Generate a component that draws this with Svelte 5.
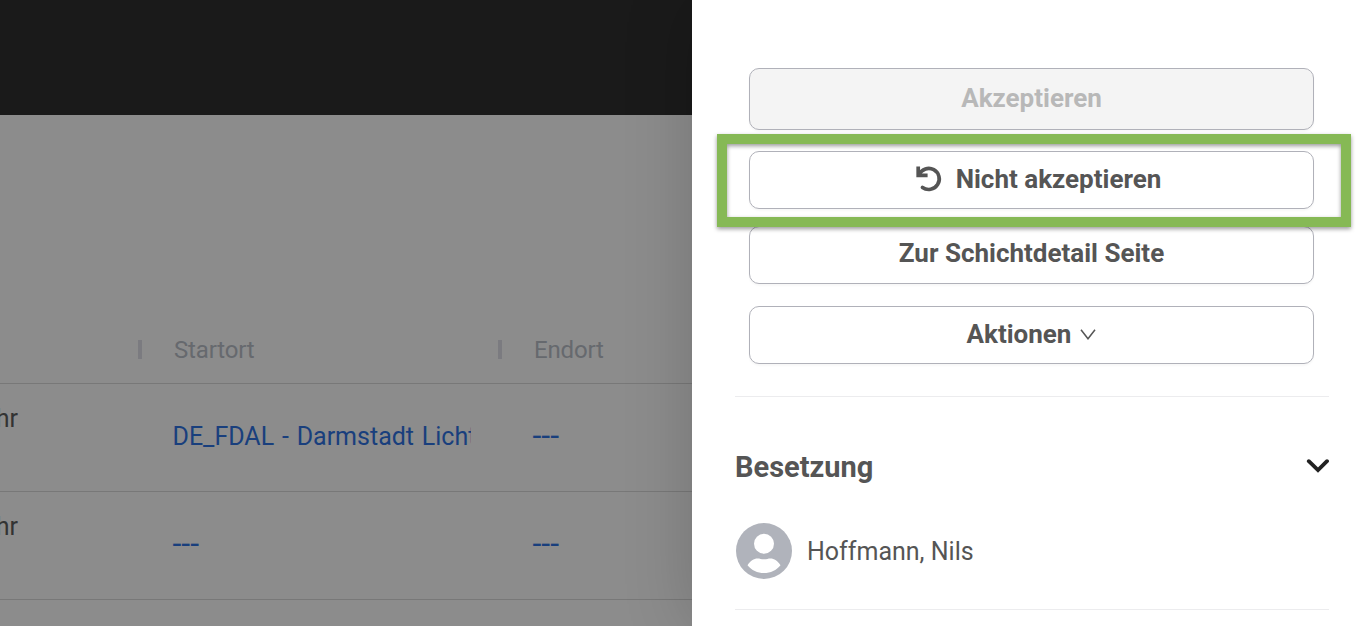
<script lang="ts">
  type Shift = {
    time: string;
    start: string;
    end: string;
  };

  const EMPTY = "---";

  const shifts: Shift[] = [
    { time: "Uhr", start: "DE_FDAL - Darmstadt Lichtwiese", end: EMPTY },
    { time: "Uhr", start: EMPTY, end: EMPTY },
  ];

  const crew: string[] = ["Hoffmann, Nils"];

  let crewOpen = $state(true);
</script>

<div class="page">
  <main class="backdrop">
    <header class="topbar"></header>
    <div class="row head">
      <span class="cell time"></span>
      <span class="cell">Startort</span>
      <span class="cell">Endort</span>
    </div>
    {#each shifts as shift}
      <div class="row shift">
        <span class="cell time">{shift.time}</span>
        {#each [shift.start, shift.end] as place}
          <span class="cell link">
            <span class="clip" class:empty={place === EMPTY}>{place}</span>
          </span>
        {/each}
      </div>
    {/each}
  </main>

  <aside class="drawer">
    <div class="actions">
      <button class="btn accept" disabled>Akzeptieren</button>
      <div class="marked">
        <button class="btn reject">
          <svg width="28" height="28" viewBox="0 0 28 28" fill="none" stroke="currentColor" stroke-width="3.7">
            <path d="M3.2 1.4V10.3H12.6" />
            <path d="M4.2 9.6A10.5 10.5 0 1 1 7.5 22.4" stroke-linecap="round" />
          </svg>
          Nicht akzeptieren
        </button>
        <div class="highlight"></div>
      </div>
      <button class="btn detail">Zur Schichtdetail Seite</button>
      <button class="btn menu">
        Aktionen
        <svg width="16" height="12" viewBox="0 0 16 12" fill="none" stroke="currentColor" stroke-width="1.5">
          <path d="M1 1.7L8 10.8L15 1.7" />
        </svg>
      </button>
    </div>

    <section class="crew">
      <button class="crew-head" onclick={() => (crewOpen = !crewOpen)}>
        <h2>Besetzung</h2>
        <svg width="23" height="18" viewBox="0 0 23 18" fill="none" stroke="#222" stroke-width="3.8" stroke-linecap="round">
          <path d="M2.8 3.2L12 12.2L21 3.2" />
        </svg>
      </button>
      {#if crewOpen}
        {#each crew as name}
          <div class="member">
            <svg width="56" height="56" viewBox="0 0 56 56">
              <circle cx="28" cy="28" r="28" fill="#b0b3bb" />
              <circle cx="28" cy="20.7" r="10" fill="#fff" />
              <path
                d="M11.5 42.2C14 38 18 35.5 21.5 35.5C24 35.5 25 36.3 28 36.3S32 35.5 34.5 35.5C38 35.5 42 38 44.5 42.2C40.5 47.2 34.5 50 28 50S15.5 47.2 11.5 42.2Z"
                fill="#fff"
              />
            </svg>
            <span>{name}</span>
          </div>
        {/each}
      {/if}
    </section>
  </aside>
</div>

<style>
  .page {
    display: flex;
    width: 1364px;
    height: 626px;
    overflow: hidden;
    font-family: Roboto, "Liberation Sans", sans-serif;
    color: #555;
  }

  .backdrop {
    width: 692px;
    flex: none;
    overflow: hidden;
    background: #8c8c8c;
  }

  .topbar {
    height: 115px;
    background: #1a1a1a;
  }

  .row {
    display: flex;
    box-sizing: border-box;
    border-bottom: 1px solid #787878;
  }

  .cell {
    flex: none;
    box-sizing: border-box;
    width: 360px;
    padding-left: 30.5px;
  }

  .cell.time {
    width: 142px;
    padding: 0;
  }

  .head {
    height: 269px;
    align-items: flex-end;
    padding-bottom: 18px;
    font-size: 24px;
    line-height: 30px;
    letter-spacing: -0.15px;
    color: #66696e;
  }

  .head .cell {
    padding-left: 32px;
    background: linear-gradient(#7b7b80, #7b7b80) 356px 5px / 4px 19px no-repeat;
  }

  .head .cell.time {
    height: 30px;
    background-position: 138px 5px;
  }

  .shift {
    height: 108px;
    font-size: 25px;
    line-height: 30px;
  }

  .shift .time {
    margin-left: -20.5px;
    width: 162.5px;
    padding-top: 20px;
    color: #333;
  }

  .shift .link {
    padding-top: 38px;
    color: #193f7d;
  }

  .clip {
    display: block;
    width: 298.5px;
    overflow: hidden;
    white-space: nowrap;
    word-spacing: 1.6px;
  }

  .empty {
    overflow: visible;
    font-size: 32px;
    line-height: 26px;
  }

  .drawer {
    position: relative;
    flex: 1;
    box-sizing: border-box;
    padding: 68px 35px 0 43px;
    background: #fff;
    box-shadow: 0 0 64px rgba(0, 0, 0, 0.18);
  }

  .actions {
    display: flex;
    flex-direction: column;
    padding: 0 15px 32px 14px;
    border-bottom: 1px solid #ececee;
  }

  button {
    font-family: inherit;
    color: inherit;
  }

  .btn {
    display: flex;
    align-items: center;
    justify-content: center;
    box-sizing: border-box;
    width: 100%;
    height: 58px;
    padding: 0 0 2px;
    border: 1px solid #b0b1b9;
    border-radius: 10px;
    background: #fff;
    box-shadow: 0 2px 2px rgba(0, 0, 0, 0.03);
    font-size: 26px;
    font-weight: 700;
  }

  .accept {
    height: 62px;
    background: #f4f4f4;
    color: #b8b8b8;
  }

  .marked {
    position: relative;
    margin: 21px 0 17px;
  }

  .reject {
    gap: 12.5px;
    padding-left: 13.5px;
  }

  /* sits over the neighbouring buttons */
  .highlight {
    position: absolute;
    inset: -17px -37px -18px -32px;
    border: 10px solid #86b955;
    filter: drop-shadow(0 2px 2px rgba(0, 0, 0, 0.4));
    pointer-events: none;
  }

  .detail {
    padding-bottom: 4px;
  }

  .menu {
    gap: 9px;
    margin-top: 22px;
  }

  .crew-head {
    display: flex;
    align-items: center;
    justify-content: space-between;
    width: 100%;
    margin-top: 52px;
    padding: 0;
    border: 0;
    background: none;
  }

  .crew-head svg {
    margin-bottom: 1px;
  }

  h2 {
    margin: 0;
    font-size: 29px;
    font-weight: 700;
    line-height: 36px;
  }

  .member {
    display: flex;
    align-items: center;
    gap: 15px;
    margin-top: 38px;
    padding: 0 0 30px 1px;
    border-bottom: 1px solid #ececee;
    font-size: 25px;
  }
</style>
